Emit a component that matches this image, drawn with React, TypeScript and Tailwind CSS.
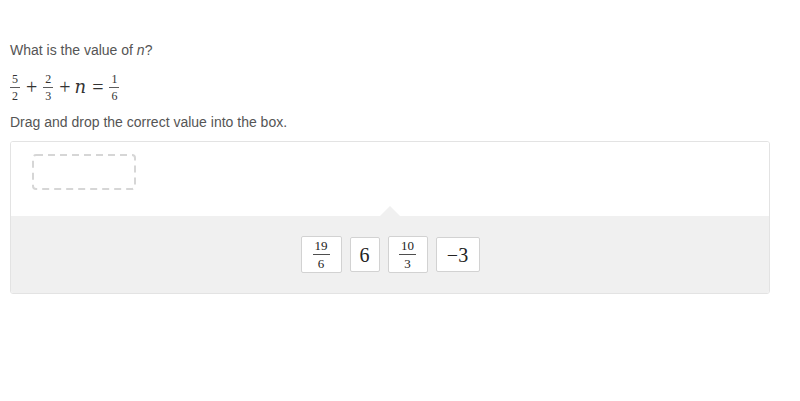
const TILES = [
  { id: 't1', num: '19', den: '6', w: 'w-[41px] h-[37px]' },
  { id: 't2', text: '6', w: 'w-[30px] h-[35px]' },
  { id: 't3', num: '10', den: '3', w: 'w-[40px] h-[37px]' },
  { id: 't4', text: '−3', w: 'w-[44px] h-[35px]' },
];

const Frac = ({ num, den, size = 'text-[12px]' }: { num: string; den: string; size?: string }) => (
  <span className={`inline-flex flex-col items-center leading-none font-['Liberation_Serif',serif] ${size}`}>
    <span className="px-[2px] pb-[2px]">{num}</span>
    <span className="h-px w-full bg-current opacity-80" />
    <span className="px-[2px] pt-[2px]">{den}</span>
  </span>
);

const Op = ({ children, cls = 'mx-[6px]' }: { children: React.ReactNode; cls?: string }) => (
  <span className={`${cls} text-[20px] leading-none font-['Liberation_Serif',serif]`}>{children}</span>
);

// empty drop target, dashed outline
const DropBox = () => (
  <svg width="104" height="36" className="block">
    <rect x="1" y="1" width="102" height="34" rx="3" fill="none" stroke="#d6d6d6" strokeWidth="2" strokeDasharray="7 5" />
  </svg>
);

const App = () => {
  return (
    <div className="w-[800px] h-[401px] bg-white px-[10px] pt-[42px] font-['Liberation_Sans',Arial,sans-serif] text-[14px] leading-[16px] text-[#555]">
      <p>
        What is the value of <i>n</i>?
      </p>

      <div className="mt-[16px] flex items-center h-[26px] text-[#333]">
        <Frac num="5" den="2" />
        <Op>+</Op>
        <Frac num="2" den="3" />
        <Op cls="ml-[6px] mr-[4px]">+</Op>
        <span className="italic text-[18px] leading-none font-['DejaVu_Serif',serif]">n</span>
        <Op>=</Op>
        <Frac num="1" den="6" />
      </div>

      <p className="mt-[14px]">Drag and drop the correct value into the box.</p>

      <div className="mt-[11px] w-[760px] rounded-[3px] border border-[#e3e3e3] overflow-hidden">
        <div className="relative h-[74px] bg-white pl-[21px] pt-[12px]">
          <DropBox />
          <div className="absolute bottom-0 left-1/2 -translate-x-1/2 w-0 h-0 border-x-[10px] border-x-transparent border-b-[10px] border-b-[#f0f0f0]" />
        </div>
        <div className="h-[77px] bg-[#f0f0f0] flex items-center justify-center gap-[8px] text-[#222]">
          {TILES.map((t) => (
            <div
              key={t.id}
              className={`${t.w} bg-white border border-[#d2d2d2] rounded-[2px] flex items-center justify-center`}
            >
              {t.num ? (
                <Frac num={t.num} den={t.den!} size="text-[13px]" />
              ) : (
                <span className="text-[20px] leading-none font-['Liberation_Serif',serif]">{t.text}</span>
              )}
            </div>
          ))}
        </div>
      </div>
    </div>
  );
};

export default App;
